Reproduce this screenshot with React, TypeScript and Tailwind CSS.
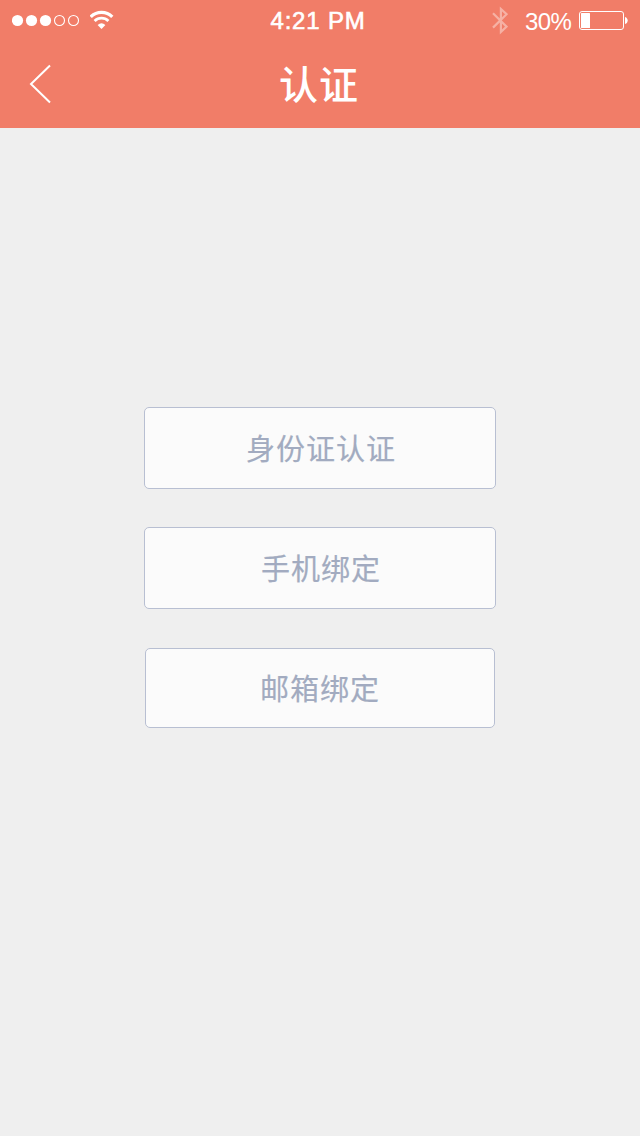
function Signal() {
  return (
    <svg className="block h-10 w-[68px] shrink-0" viewBox="0 0 68 40" fill="white">
      <circle cx="5.5" cy="20.5" r="5.6" />
      <circle cx="19.5" cy="20.5" r="5.6" />
      <circle cx="33.5" cy="20.5" r="5.6" />
      <circle cx="47.5" cy="20.5" r="5" fill="none" stroke="white" strokeWidth="1.1" />
      <circle cx="61.5" cy="20.5" r="5" fill="none" stroke="white" strokeWidth="1.1" />
    </svg>
  );
}

function Wifi() {
  return (
    <svg className="block h-10 w-6 shrink-0" viewBox="0 0 24 40" fill="none" stroke="white">
      <path d="M0.7 16.9A15.2 15.2 0 0 1 22.3 16.9" strokeWidth="3.2" />
      <path d="M4.6 20.9A9.8 9.8 0 0 1 18.4 20.9" strokeWidth="2.8" />
      <path d="M11.5 29L7.6 25A6 6 0 0 1 15.4 25Z" fill="white" stroke="none" />
    </svg>
  );
}

function Bluetooth() {
  return (
    <svg className="block h-10 w-4 shrink-0 opacity-40" viewBox="0 0 16 40" fill="none" stroke="white" strokeWidth="2.2">
      <path d="M1 13.2L14.6 26.6L8.9 32V9L14.6 14.2L1 27.6" />
    </svg>
  );
}

function Battery() {
  return (
    <svg className="block h-10 w-[49px] shrink-0" viewBox="0 0 49 40">
      <rect x="0.5" y="11.5" width="44" height="18" rx="2.5" fill="none" stroke="white" />
      <rect x="2" y="13" width="9" height="15" rx="0.5" fill="white" />
      <path d="M46 17C49.6 18 49.6 23 46 24Z" fill="white" />
    </svg>
  );
}

const buttonBase =
  "flex items-center justify-center rounded-[5px] border border-[#b8bfd2] bg-[#fbfbfb] pt-[5px] text-[29px] leading-none tracking-[1px] text-[#a2abc0] [-webkit-text-stroke:0.2px_#a2abc0]";

export default function App() {
  return (
    <div className="flex h-[1136px] w-[640px] flex-col bg-[#efefef] font-['Liberation_Sans','Noto_Sans_CJK_SC',sans-serif]">
      <header className="flex h-32 shrink-0 flex-col bg-[#f17d68] text-white">
        <div className="flex h-10 items-center">
          <div className="flex w-[269px] items-center gap-2.5 pl-3">
            <Signal />
            <Wifi />
          </div>
          <div className="w-[98px] pt-0.5 text-center text-2xl leading-none tracking-[0.8px] whitespace-nowrap [-webkit-text-stroke:0.6px_white]">
            4:21 PM
          </div>
          <div className="flex flex-1 items-center justify-end pr-3">
            <Bluetooth />
            <span className="ml-[17px] w-[54px] pt-[3px] text-2xl leading-none tracking-[-0.6px]">30%</span>
            <Battery />
          </div>
        </div>
        <div className="flex h-[88px] items-center">
          <button className="flex h-full w-20 items-center pl-7" aria-label="返回">
            <svg className="block h-[88px] w-6" viewBox="0 0 24 88" fill="none" stroke="white" strokeWidth="2">
              <path d="M22 25.5L3 44L22 62.5" />
            </svg>
          </button>
          <h1 className="w-[478px] pt-[3px] text-center text-[39px] leading-none font-medium tracking-[1px]">认证</h1>
        </div>
      </header>
      <main className="flex flex-col items-center pt-[279px]">
        <button className={`${buttonBase} h-[82px] w-[352px] pl-0.5`}>身份证认证</button>
        <button className={`${buttonBase} mt-[38px] h-[82px] w-[352px] pl-0.5`}>手机绑定</button>
        <button className={`${buttonBase} mt-[39px] h-20 w-[350px]`}>邮箱绑定</button>
      </main>
    </div>
  );
}
